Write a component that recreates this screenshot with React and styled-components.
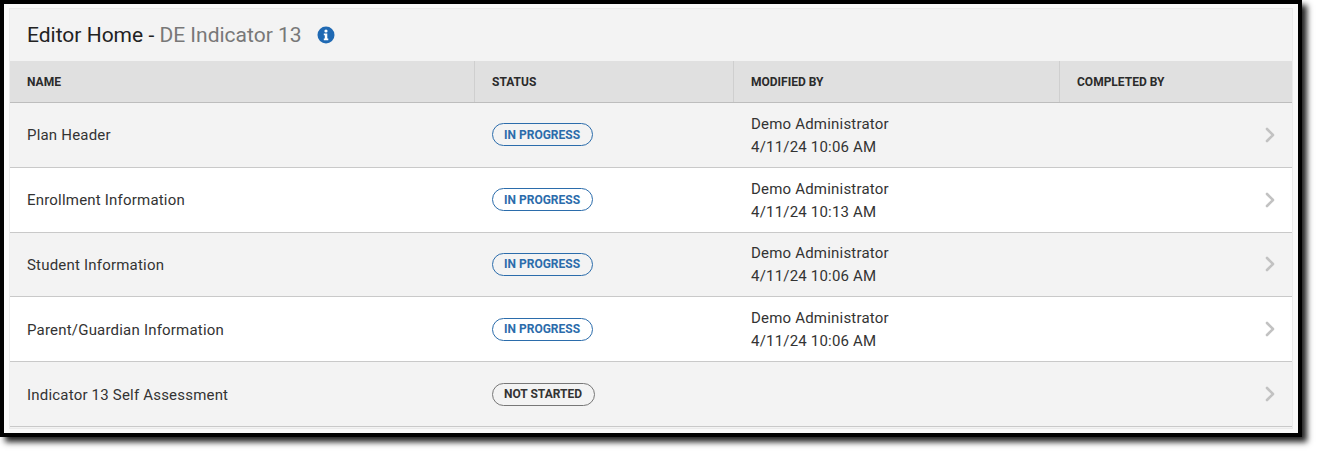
import React from "react"
import styled, { createGlobalStyle } from "styled-components"
import { ChevronRight } from "lucide-react"

const GlobalStyle = createGlobalStyle`
  html, body {
    margin: 0;
    background: #fff;
    font-family: Roboto, "Liberation Sans", sans-serif;
  }
`

const Page = styled.div`
  height: 452px;
`

const Frame = styled.div`
  box-sizing: border-box;
  width: 1302px;
  height: 437px;
  border: 4px solid #000;
  padding: 5px 6px 5px 6px;
  background: #f9f9f9;
  box-shadow: 5px 5px 6px #222;
`

const Card = styled.div`
  box-sizing: border-box;
  height: 100%;
  background: #f3f3f3;
  box-shadow: 0 0 0 1px #ebebeb;
`

const TitleBar = styled.div`
  display: flex;
  align-items: center;
  height: 52px;
  padding-left: 17px;
  box-sizing: border-box;
`

const Title = styled.h1`
  margin: 0;
  font-size: 21px;
  font-weight: 400;
  color: #222;
`

const PlanName = styled.span`
  color: #787878;
`

const InfoIcon = styled.svg`
  width: 18px;
  height: 18px;
  margin-left: 15px;
`

const Row = styled.div`
  display: grid;
  grid-template-columns: 465px 259px 326px 1fr 32px;
  height: ${props => props.$height}px;
  border-bottom: 1px solid ${props => props.$line || "#c9c9c9"};
  background: ${props => props.$bg};
  box-sizing: content-box;
`

const HeadCell = styled.div`
  display: flex;
  align-items: center;
  padding-left: 17px;
  font-size: 12px;
  font-weight: 700;
  color: #2b2b2b;
  border-left: ${props => (props.$first ? "none" : "1px solid #cfcfcf")};
  margin-left: ${props => (props.$first ? "0" : "-1px")};
`

const Cell = styled.div`
  display: flex;
  flex-direction: column;
  justify-content: center;
  align-items: flex-start;
  padding-left: 17px;
  font-size: 15px;
  letter-spacing: 0.2px;
  color: #333;
`

const Name = styled(Cell)`
  padding-top: 1px;
`

const Modified = styled(Cell)`
  padding-top: 2px;
  line-height: 23px;
`

const Pill = styled.span`
  box-sizing: border-box;
  height: 23px;
  padding: 0 12px 0 11px;
  display: inline-flex;
  align-items: center;
  border: 1px solid ${props => (props.$done ? "#777" : "#2b6cab")};
  border-radius: 12px;
  font-size: 12px;
  font-weight: 700;
  letter-spacing: 0;
  color: ${props => (props.$done ? "#333" : "#2b6cab")};
`

const Arrow = styled.div`
  display: flex;
  align-items: center;
  margin-left: -2px;
  color: #c2c2c2;
`

const rows = [
  { name: "Plan Header", status: "IN PROGRESS", date: "4/11/24 10:06 AM", bg: "#f3f3f3" },
  { name: "Enrollment Information", status: "IN PROGRESS", date: "4/11/24 10:13 AM", bg: "#fff" },
  { name: "Student Information", status: "IN PROGRESS", date: "4/11/24 10:06 AM", bg: "#f3f3f3" },
  { name: "Parent/Guardian Information", status: "IN PROGRESS", date: "4/11/24 10:06 AM", bg: "#fff" },
  { name: "Indicator 13 Self Assessment", status: "NOT STARTED", bg: "#f3f3f3" },
]

const App = () => (
  <Page>
    <GlobalStyle />
    <Frame>
      <Card>
        <TitleBar>
          <Title>
            Editor Home - <PlanName>DE Indicator 13</PlanName>
          </Title>
          <InfoIcon viewBox="0 0 18 18">
            <circle cx="9" cy="9" r="8.5" fill="#1f69b3" />
            <circle cx="9" cy="5" r="1.6" fill="#fff" />
            <path d="M6.8 7.6h3.5v5h1v1.6H6.8v-1.6h1v-3.4h-1z" fill="#fff" />
          </InfoIcon>
        </TitleBar>
        <Row $height={41} $bg="#e0e0e0" $line="#bdbdbd">
          <HeadCell $first>NAME</HeadCell>
          <HeadCell>STATUS</HeadCell>
          <HeadCell>MODIFIED BY</HeadCell>
          <HeadCell>COMPLETED BY</HeadCell>
        </Row>
        {rows.map(row => (
          <Row key={row.name} $height={63.8} $bg={row.bg}>
            <Name>{row.name}</Name>
            <Cell>
              <Pill $done={!row.date}>{row.status}</Pill>
            </Cell>
            <Modified>
              {row.date && (
                <>
                  <span>Demo Administrator</span>
                  <span>{row.date}</span>
                </>
              )}
            </Modified>
            <Cell />
            <Arrow>
              <ChevronRight size={24} strokeWidth={2.6} />
            </Arrow>
          </Row>
        ))}
      </Card>
    </Frame>
  </Page>
)

export default App
